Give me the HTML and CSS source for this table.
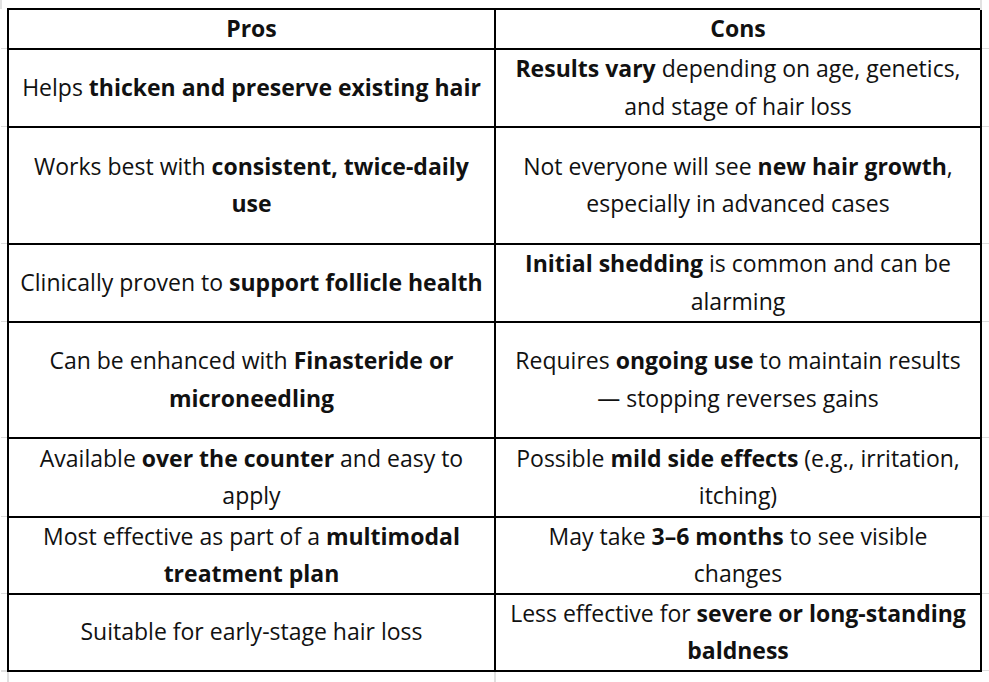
FILE: index.html
```html
<!DOCTYPE html>
<html lang="en">
<head>
<meta charset="utf-8">
<title>Pros and Cons</title>
<link rel="stylesheet" href="styles.css">
</head>
<body>
<table class="sheet">
  <colgroup>
    <col class="c-stub-l">
    <col class="c-main-l">
    <col class="c-main-r">
    <col class="c-stub-r">
  </colgroup>
  <tr class="r-top">
    <td class="stub top-l"></td><td class="gap"></td><td class="gap"></td><td class="stub top-r"></td>
  </tr>
  <tr class="r-head">
    <td class="stub"></td><th>Pros</th><th>Cons</th><td class="stub"></td>
  </tr>
  <tr class="r-78">
    <td class="stub"></td>
    <td>Helps <b>thicken and preserve existing hair</b></td>
    <td><b>Results vary</b> depending on age, genetics,<br>and stage of hair loss</td>
    <td class="stub"></td>
  </tr>
  <tr class="r-117">
    <td class="stub"></td>
    <td>Works best with <b>consistent, twice-daily</b><br><b>use</b></td>
    <td>Not everyone will see <b>new hair growth</b>,<br>especially in advanced cases</td>
    <td class="stub"></td>
  </tr>
  <tr class="r-78">
    <td class="stub"></td>
    <td>Clinically proven to <b>support follicle health</b></td>
    <td><b>Initial shedding</b> is common and can be<br>alarming</td>
    <td class="stub"></td>
  </tr>
  <tr class="r-116">
    <td class="stub"></td>
    <td>Can be enhanced with <b>Finasteride or</b><br><b>microneedling</b></td>
    <td>Requires <b>ongoing use</b> to maintain results<br>— stopping reverses gains</td>
    <td class="stub"></td>
  </tr>
  <tr class="r-79">
    <td class="stub"></td>
    <td>Available <b>over the counter</b> and easy to<br>apply</td>
    <td>Possible <b>mild side effects</b> (e.g., irritation,<br>itching)</td>
    <td class="stub"></td>
  </tr>
  <tr class="r-77">
    <td class="stub"></td>
    <td>Most effective as part of a <b>multimodal</b><br><b>treatment plan</b></td>
    <td>May take <b>3–6 months</b> to see visible<br>changes</td>
    <td class="stub"></td>
  </tr>
  <tr class="r-77">
    <td class="stub"></td>
    <td>Suitable for early-stage hair loss</td>
    <td>Less effective for <b>severe or long-standing</b><br><b>baldness</b></td>
    <td class="stub"></td>
  </tr>
  <tr class="r-bottom">
    <td class="stub"></td><td class="gap grid-l"></td><td class="gap grid-l"></td><td class="stub"></td>
  </tr>
</table>
</body>
</html>
```

FILE: styles.css
```css
html, body {
  margin: 0;
  padding: 0;
  background: #ffffff;
}

.sheet {
  border-collapse: collapse;
  table-layout: fixed;
  width: 989px;
  font-family: "Open Sans", Lato, "Liberation Sans", sans-serif;
  font-size: 23px;
  line-height: 37.5px;
  color: #111111;
}

.c-stub-l { width: 7px; }
.c-main-l { width: 487px; }
.c-main-r { width: 486px; }
.c-stub-r { width: 9px; }

.sheet th,
.sheet td {
  padding: 0;
  text-align: center;
  vertical-align: middle;
  white-space: nowrap;
  overflow: hidden;
}

.sheet th {
  font-weight: 700;
}

.sheet b {
  font-weight: 700;
}

.sheet tr:not(.r-top):not(.r-bottom) > th,
.sheet tr:not(.r-top):not(.r-bottom) > td:not(.stub) {
  border: 2px solid #000000;
}

.stub {
  border-bottom: 1px solid #dcdcdc;
}

.r-top .stub,
.r-bottom .stub {
  border-bottom: none;
}

.top-l {
  border-left: 2px solid #e2e2e2;
}

.top-r {
  border-left: 2px solid #e2e2e2;
}

.r-bottom .grid-l {
  border-left: 2px solid #e0e0e0;
}

.r-bottom .stub:first-child {
  border-top: 2px solid #e0e0e0;
}

.r-top { height: 9px; }
.r-head { height: 39px; }
.r-78 { height: 78px; }
.r-117 { height: 117px; }
.r-116 { height: 116px; }
.r-79 { height: 79px; }
.r-77 { height: 77px; }
.r-bottom { height: 12px; }
```
